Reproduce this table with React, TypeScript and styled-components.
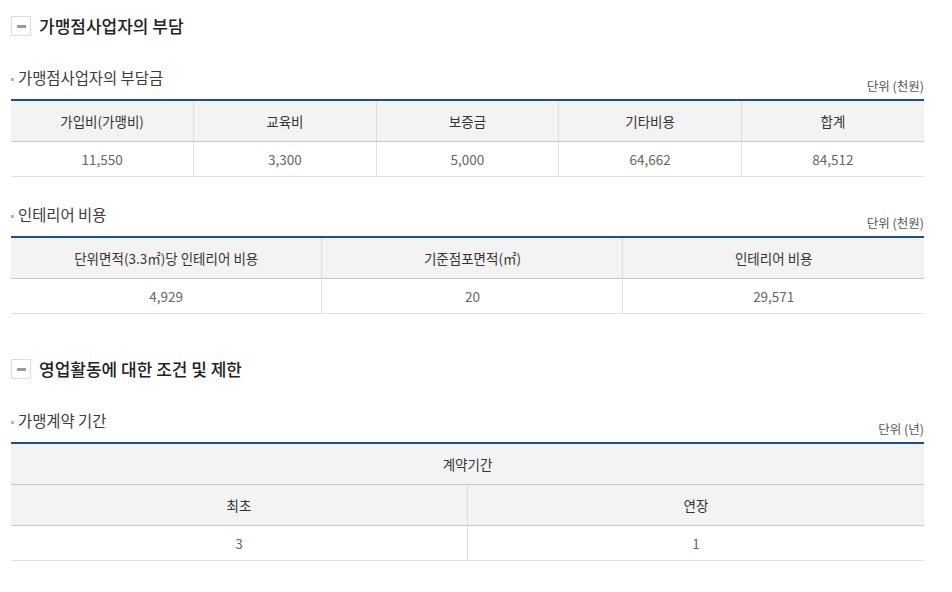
import React from "react";
import styled, { createGlobalStyle } from "styled-components";

const GlobalStyle = createGlobalStyle`
  html, body {
    margin: 0;
    padding: 0;
    background: #ffffff;
  }
  body {
    font-family: "Noto Sans CJK KR", "Noto Sans", sans-serif;
    color: #333;
  }
`;

const Page = styled.div`
  width: 913px;
  margin-left: 11px;
  padding-top: 16px;
`;

const Section = styled.section<{ $gap?: number }>`
  margin-top: ${(p) => p.$gap ?? 0}px;
`;

const SectionTitle = styled.h2`
  display: flex;
  align-items: center;
  gap: 8px;
  margin: 0;
  height: 20px;
  font-size: 17px;
  font-weight: 500;
  color: #222;
  line-height: 20px;
`;

const ToggleBox = styled.span`
  display: flex;
  align-items: center;
  justify-content: center;
  width: 18px;
  height: 18px;
  border: 1px solid #dcdcdc;
  background: #fff;
  flex-shrink: 0;

  &::before {
    content: "";
    display: block;
    width: 9px;
    height: 3px;
    background: #9a9a9a;
  }
`;

const SubHeader = styled.div<{ $top: number }>`
  display: flex;
  justify-content: space-between;
  align-items: flex-end;
  margin-top: ${(p) => p.$top}px;
  margin-bottom: 5px;
`;

const SubTitle = styled.h3`
  display: flex;
  align-items: center;
  gap: 4px;
  margin: 0;
  padding-bottom: 7px;
  font-size: 15.4px;
  font-weight: 400;
  line-height: 20px;
  color: #3c3c3c;

  &::before {
    content: "";
    display: block;
    width: 3px;
    height: 3px;
    background: #b5b5b5;
    margin-top: 4px;
  }
`;

const Unit = styled.span`
  font-size: 12.5px;
  line-height: 16px;
  color: #555;
`;

const Table = styled.table`
  width: 100%;
  border-collapse: collapse;
  table-layout: fixed;
  border-top: 2px solid #1b4f95;
  font-size: 13.5px;
  line-height: 18px;
`;

const Th = styled.th`
  height: 40px;
  padding: 0;
  background: #f3f3f3;
  border-bottom: 1px solid #c8c8c8;
  border-left: 1px solid #dcdcdc;
  font-weight: 400;
  color: #333;
  text-align: center;
  vertical-align: middle;

  &:first-child {
    border-left: none;
  }
`;

const Td = styled.td`
  height: 34px;
  padding: 0;
  border-bottom: 1px solid #e2e2e2;
  border-left: 1px solid #e2e2e2;
  color: #666;
  text-align: center;
  vertical-align: middle;

  &:first-child {
    border-left: none;
  }
`;

const Col = styled.col<{ $w: string }>`
  width: ${(p) => p.$w};
`;

const fees = [
  ["가입비(가맹비)", "11,550"],
  ["교육비", "3,300"],
  ["보증금", "5,000"],
  ["기타비용", "64,662"],
  ["합계", "84,512"],
];

const interior = [
  ["단위면적(3.3㎡)당 인테리어 비용", "4,929", "34.06%"],
  ["기준점포면적(㎡)", "20", "32.97%"],
  ["인테리어 비용", "29,571", "32.97%"],
];

export default function App() {
  return (
    <>
      <GlobalStyle />
      <Page>
        <Section>
          <SectionTitle>
            <ToggleBox />
            가맹점사업자의 부담
          </SectionTitle>

          <SubHeader $top={31}>
            <SubTitle>가맹점사업자의 부담금</SubTitle>
            <Unit>단위 (천원)</Unit>
          </SubHeader>
          <Table>
            <colgroup>
              {fees.map((f) => (
                <Col key={f[0]} $w="20%" />
              ))}
            </colgroup>
            <thead>
              <tr>
                {fees.map((f) => (
                  <Th key={f[0]}>{f[0]}</Th>
                ))}
              </tr>
            </thead>
            <tbody>
              <tr>
                {fees.map((f) => (
                  <Td key={f[0]}>{f[1]}</Td>
                ))}
              </tr>
            </tbody>
          </Table>

          <SubHeader $top={27}>
            <SubTitle>인테리어 비용</SubTitle>
            <Unit>단위 (천원)</Unit>
          </SubHeader>
          <Table>
            <colgroup>
              {interior.map((f) => (
                <Col key={f[0]} $w={f[2]} />
              ))}
            </colgroup>
            <thead>
              <tr>
                {interior.map((f) => (
                  <Th key={f[0]}>{f[0]}</Th>
                ))}
              </tr>
            </thead>
            <tbody>
              <tr>
                {interior.map((f) => (
                  <Td key={f[0]}>{f[1]}</Td>
                ))}
              </tr>
            </tbody>
          </Table>
        </Section>

        <Section $gap={45}>
          <SectionTitle>
            <ToggleBox />
            영업활동에 대한 조건 및 제한
          </SectionTitle>

          <SubHeader $top={31}>
            <SubTitle>가맹계약 기간</SubTitle>
            <Unit>단위 (년)</Unit>
          </SubHeader>
          <Table>
            <colgroup>
              <Col $w="50%" />
              <Col $w="50%" />
            </colgroup>
            <thead>
              <tr>
                <Th colSpan={2}>계약기간</Th>
              </tr>
              <tr>
                <Th>최초</Th>
                <Th>연장</Th>
              </tr>
            </thead>
            <tbody>
              <tr>
                <Td>3</Td>
                <Td>1</Td>
              </tr>
            </tbody>
          </Table>
        </Section>
      </Page>
    </>
  );
}
